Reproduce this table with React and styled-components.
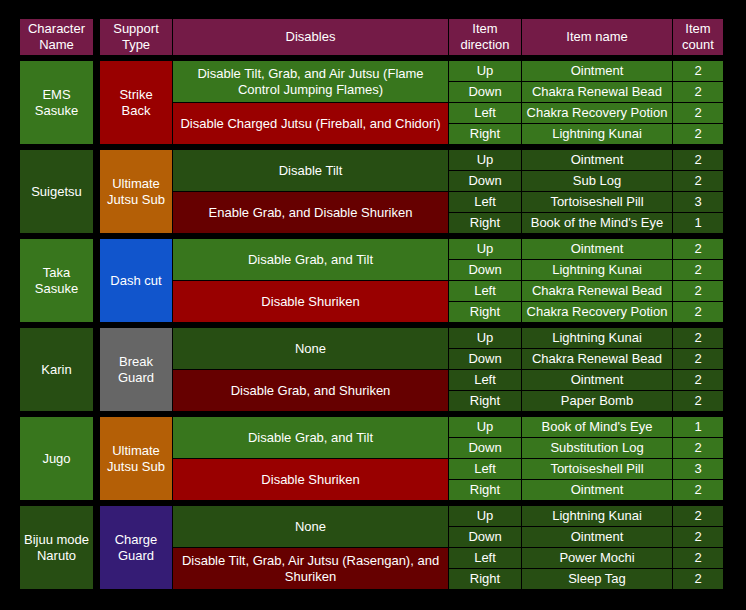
import React from "react";
import styled, { createGlobalStyle } from "styled-components";

const GlobalStyle = createGlobalStyle`
  body {
    margin: 0;
    background: #000;
    font-family: "Liberation Sans", Arial, sans-serif;
  }
`;

const COLORS = {
  header: "#741b47",
  green: "#38761d",
  darkGreen: "#274e13",
  red: "#990000",
  darkRed: "#660000",
  orange: "#b45f06",
  blue: "#1155cc",
  gray: "#666666",
  purple: "#351c75",
};

const characters = [
  {
    name: "EMS Sasuke",
    support: "Strike Back",
    supportColor: COLORS.red,
    bright: true,
    disables: [
      "Disable Tilt, Grab, and Air Jutsu (Flame Control Jumping Flames)",
      "Disable Charged Jutsu (Fireball, and Chidori)",
    ],
    items: [
      ["Up", "Ointment", 2],
      ["Down", "Chakra Renewal Bead", 2],
      ["Left", "Chakra Recovery Potion", 2],
      ["Right", "Lightning Kunai", 2],
    ],
  },
  {
    name: "Suigetsu",
    support: "Ultimate Jutsu Sub",
    supportColor: COLORS.orange,
    bright: false,
    disables: ["Disable Tilt", "Enable Grab, and Disable Shuriken"],
    items: [
      ["Up", "Ointment", 2],
      ["Down", "Sub Log", 2],
      ["Left", "Tortoiseshell Pill", 3],
      ["Right", "Book of the Mind's Eye", 1],
    ],
  },
  {
    name: "Taka Sasuke",
    support: "Dash cut",
    supportColor: COLORS.blue,
    bright: true,
    disables: ["Disable Grab, and Tilt", "Disable Shuriken"],
    items: [
      ["Up", "Ointment", 2],
      ["Down", "Lightning Kunai", 2],
      ["Left", "Chakra Renewal Bead", 2],
      ["Right", "Chakra Recovery Potion", 2],
    ],
  },
  {
    name: "Karin",
    support: "Break Guard",
    supportColor: COLORS.gray,
    bright: false,
    disables: ["None", "Disable Grab, and Shuriken"],
    items: [
      ["Up", "Lightning Kunai", 2],
      ["Down", "Chakra Renewal Bead", 2],
      ["Left", "Ointment", 2],
      ["Right", "Paper Bomb", 2],
    ],
  },
  {
    name: "Jugo",
    support: "Ultimate Jutsu Sub",
    supportColor: COLORS.orange,
    bright: true,
    disables: ["Disable Grab, and Tilt", "Disable Shuriken"],
    items: [
      ["Up", "Book of Mind's Eye", 1],
      ["Down", "Substitution Log", 2],
      ["Left", "Tortoiseshell Pill", 3],
      ["Right", "Ointment", 2],
    ],
  },
  {
    name: "Bijuu mode Naruto",
    support: "Charge Guard",
    supportColor: COLORS.purple,
    bright: false,
    disables: [
      "None",
      "Disable Tilt, Grab, Air Jutsu (Rasengan), and Shuriken",
    ],
    items: [
      ["Up", "Lightning Kunai", 2],
      ["Down", "Ointment", 2],
      ["Left", "Power Mochi", 2],
      ["Right", "Sleep Tag", 2],
    ],
  },
];

const Page = styled.div`
  padding: 19px 0 0 20px;
  display: flex;
  flex-direction: column;
  gap: 6px;
`;

const Row = styled.div`
  display: flex;
  gap: 7px;
  height: ${(p) => p.$height}px;
`;

const Columns = styled.div`
  display: grid;
  grid-template-columns: 72px 275px 72px 150px 50px;
  grid-template-rows: ${(p) => p.$rows};
  gap: 1px;
  background: #000;
`;

const Cell = styled.div`
  display: flex;
  align-items: center;
  justify-content: center;
  text-align: center;
  box-sizing: border-box;
  padding: 0 ${(p) => p.$pad || 3}px;
  background: ${(p) => p.$bg};
  color: #fff;
  font-size: 13px;
  line-height: 16px;
  grid-row: ${(p) => p.$row || "auto"};
  grid-column: ${(p) => p.$col || "auto"};
`;

const NameCell = styled(Cell)`
  width: 73px;
`;

function Group({ data }) {
  const base = data.bright ? COLORS.green : COLORS.darkGreen;
  const bad = data.bright ? COLORS.red : COLORS.darkRed;
  return (
    <Row $height={83}>
      <NameCell $bg={base}>{data.name}</NameCell>
      <Columns $rows="repeat(4, 20px)">
        <Cell $bg={data.supportColor} $pad={4} $row="1 / span 4" $col={1}>
          {data.support}
        </Cell>
        <Cell $bg={base} $row="1 / span 2" $col={2}>
          {data.disables[0]}
        </Cell>
        <Cell $bg={bad} $row="3 / span 2" $col={2}>
          {data.disables[1]}
        </Cell>
        {data.items.map(([dir, name, count], i) => (
          <React.Fragment key={dir}>
            <Cell $bg={base} $row={i + 1} $col={3}>
              {dir}
            </Cell>
            <Cell $bg={base} $row={i + 1} $col={4}>
              {name}
            </Cell>
            <Cell $bg={base} $row={i + 1} $col={5}>
              {count}
            </Cell>
          </React.Fragment>
        ))}
      </Columns>
    </Row>
  );
}

export default function App() {
  return (
    <>
      <GlobalStyle />
      <Page>
        <Row $height={36}>
          <NameCell $bg={COLORS.header}>Character Name</NameCell>
          <Columns $rows="36px">
            <Cell $bg={COLORS.header} $pad={10}>Support Type</Cell>
            <Cell $bg={COLORS.header}>Disables</Cell>
            <Cell $bg={COLORS.header} $pad={1}>Item direction</Cell>
            <Cell $bg={COLORS.header}>Item name</Cell>
            <Cell $bg={COLORS.header} $pad={6}>Item count</Cell>
          </Columns>
        </Row>
        {characters.map((c) => (
          <Group key={c.name} data={c} />
        ))}
      </Page>
    </>
  );
}
